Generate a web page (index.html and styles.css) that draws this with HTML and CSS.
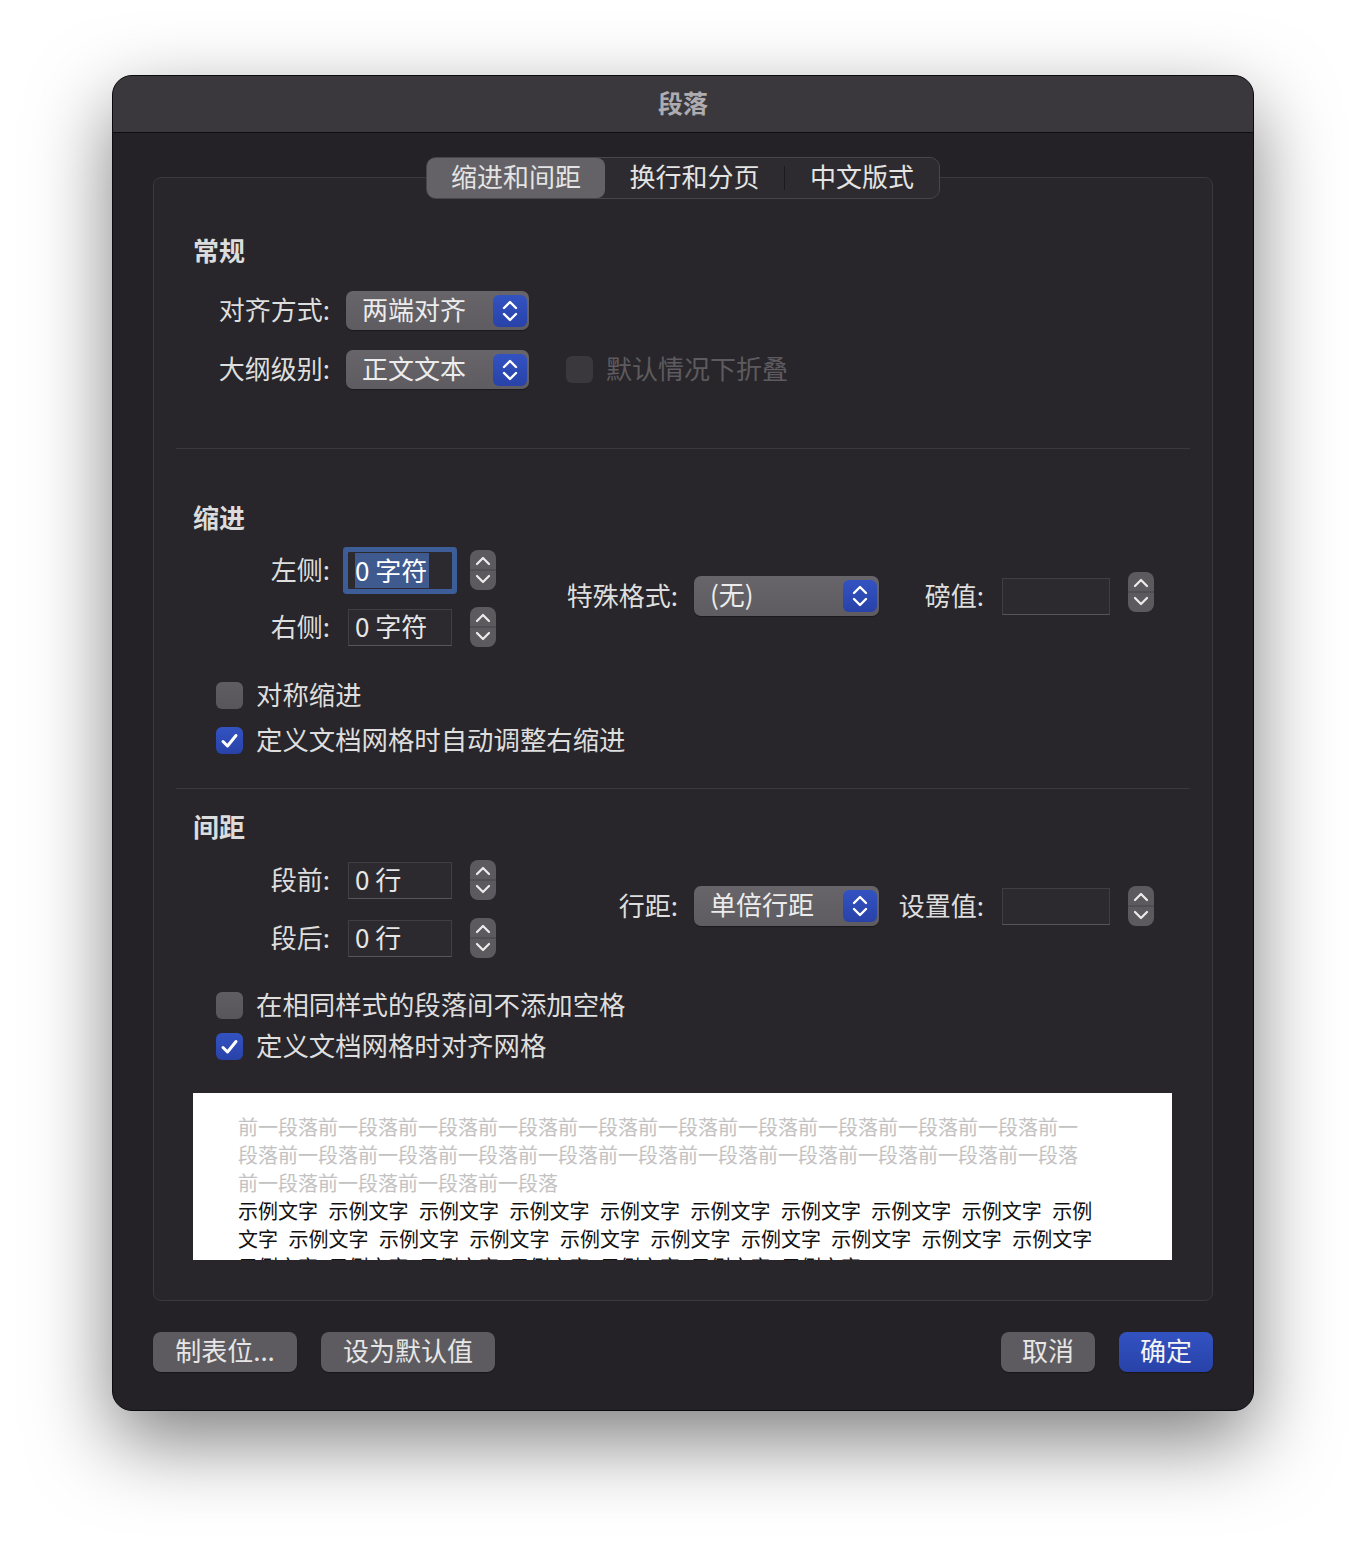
FILE: index.html
```html
<!DOCTYPE html>
<html lang="zh-CN">
<head>
    <meta charset="UTF-8">
    <meta name="viewport" content="width=device-width, initial-scale=1.0">
    <title>段落</title>
    <link rel="stylesheet" href="styles.css">
</head>
<body>

<div class="window">
    <div class="titlebar">段落</div>

    <div class="content">
        <!-- Tabs -->
        <div class="tabs-wrap">
            <div class="tabs">
                <div class="tab active">缩进和间距</div>
                <div class="tab">换行和分页</div>
                <div class="tab-sep"></div>
                <div class="tab last">中文版式</div>
            </div>
        </div>

        <div class="group">
            <!-- General -->
            <section class="sec general">
                <h2>常规</h2>
                <div class="row first">
                    <span class="lbl">对齐方式:</span>
                    <div class="popup">
                        <span>两端对齐</span>
                        <svg class="arrows" viewBox="0 0 34 32"><path d="M11 13l6-6 6 6M11 19l6 6 6-6" fill="none" stroke="#fff" stroke-width="2.4" stroke-linecap="round" stroke-linejoin="round"/></svg>
                    </div>
                </div>
                <div class="row">
                    <span class="lbl">大纲级别:</span>
                    <div class="popup">
                        <span>正文文本</span>
                        <svg class="arrows" viewBox="0 0 34 32"><path d="M11 13l6-6 6 6M11 19l6 6 6-6" fill="none" stroke="#fff" stroke-width="2.4" stroke-linecap="round" stroke-linejoin="round"/></svg>
                    </div>
                    <span class="box disabled"></span>
                    <span class="disabled-text">默认情况下折叠</span>
                </div>
            </section>

            <!-- Indent -->
            <section class="sec indent">
                <h2>缩进</h2>
                <div class="fields">
                    <div class="stack">
                        <div class="frow">
                            <span class="lbl">左侧:</span>
                            <div class="field focused"><span class="sel">0 字符</span></div>
                            <svg class="stepper" viewBox="0 0 26 40"><rect width="26" height="40" rx="8" fill="#5c5a5e"/><line x1="0" y1="20" x2="26" y2="20" stroke="#444246"/><path d="M7 14l6-6 6 6M7 26l6 6 6-6" fill="none" stroke="#ececec" stroke-width="2.2" stroke-linecap="round" stroke-linejoin="round"/></svg>
                        </div>
                        <div class="frow">
                            <span class="lbl">右侧:</span>
                            <div class="field">0 字符</div>
                            <svg class="stepper" viewBox="0 0 26 40"><rect width="26" height="40" rx="8" fill="#5c5a5e"/><line x1="0" y1="20" x2="26" y2="20" stroke="#444246"/><path d="M7 14l6-6 6 6M7 26l6 6 6-6" fill="none" stroke="#ececec" stroke-width="2.2" stroke-linecap="round" stroke-linejoin="round"/></svg>
                        </div>
                    </div>
                    <div class="side up5">
                        <span class="lbl1">特殊格式:</span>
                        <div class="popup wide">
                            <span>(无)</span>
                            <svg class="arrows" viewBox="0 0 34 32"><path d="M11 13l6-6 6 6M11 19l6 6 6-6" fill="none" stroke="#fff" stroke-width="2.4" stroke-linecap="round" stroke-linejoin="round"/></svg>
                        </div>
                        <span class="lbl2">磅值:</span>
                        <div class="field wide"></div>
                        <svg class="stepper raised" viewBox="0 0 26 40"><rect width="26" height="40" rx="8" fill="#5c5a5e"/><line x1="0" y1="20" x2="26" y2="20" stroke="#444246"/><path d="M7 14l6-6 6 6M7 26l6 6 6-6" fill="none" stroke="#ececec" stroke-width="2.2" stroke-linecap="round" stroke-linejoin="round"/></svg>
                    </div>
                </div>
                <div class="check first">
                    <span class="box"></span>
                    <span class="ctext">对称缩进</span>
                </div>
                <div class="check">
                    <span class="box on"><svg viewBox="0 0 27 27"><path d="M7 14.5l4.5 4.5 8.5-10.5" fill="none" stroke="#fff" stroke-width="3" stroke-linecap="round" stroke-linejoin="round"/></svg></span>
                    <span class="ctext">定义文档网格时自动调整右缩进</span>
                </div>
            </section>

            <!-- Spacing -->
            <section class="sec spacing">
                <h2>间距</h2>
                <div class="fields">
                    <div class="stack">
                        <div class="frow">
                            <span class="lbl">段前:</span>
                            <div class="field">0 行</div>
                            <svg class="stepper" viewBox="0 0 26 40"><rect width="26" height="40" rx="8" fill="#5c5a5e"/><line x1="0" y1="20" x2="26" y2="20" stroke="#444246"/><path d="M7 14l6-6 6 6M7 26l6 6 6-6" fill="none" stroke="#ececec" stroke-width="2.2" stroke-linecap="round" stroke-linejoin="round"/></svg>
                        </div>
                        <div class="frow">
                            <span class="lbl">段后:</span>
                            <div class="field">0 行</div>
                            <svg class="stepper" viewBox="0 0 26 40"><rect width="26" height="40" rx="8" fill="#5c5a5e"/><line x1="0" y1="20" x2="26" y2="20" stroke="#444246"/><path d="M7 14l6-6 6 6M7 26l6 6 6-6" fill="none" stroke="#ececec" stroke-width="2.2" stroke-linecap="round" stroke-linejoin="round"/></svg>
                        </div>
                    </div>
                    <div class="side up6">
                        <span class="lbl1">行距:</span>
                        <div class="popup wide">
                            <span>单倍行距</span>
                            <svg class="arrows" viewBox="0 0 34 32"><path d="M11 13l6-6 6 6M11 19l6 6 6-6" fill="none" stroke="#fff" stroke-width="2.4" stroke-linecap="round" stroke-linejoin="round"/></svg>
                        </div>
                        <span class="lbl2">设置值:</span>
                        <div class="field wide"></div>
                        <svg class="stepper" viewBox="0 0 26 40"><rect width="26" height="40" rx="8" fill="#5c5a5e"/><line x1="0" y1="20" x2="26" y2="20" stroke="#444246"/><path d="M7 14l6-6 6 6M7 26l6 6 6-6" fill="none" stroke="#ececec" stroke-width="2.2" stroke-linecap="round" stroke-linejoin="round"/></svg>
                    </div>
                </div>
                <div class="check first">
                    <span class="box"></span>
                    <span class="ctext">在相同样式的段落间不添加空格</span>
                </div>
                <div class="check tight">
                    <span class="box on"><svg viewBox="0 0 27 27"><path d="M7 14.5l4.5 4.5 8.5-10.5" fill="none" stroke="#fff" stroke-width="3" stroke-linecap="round" stroke-linejoin="round"/></svg></span>
                    <span class="ctext">定义文档网格时对齐网格</span>
                </div>

                <!-- Preview -->
                <div class="preview">
                    <div class="before">前一段落前一段落前一段落前一段落前一段落前一段落前一段落前一段落前一段落前一段落前一</div>
                    <div class="before">段落前一段落前一段落前一段落前一段落前一段落前一段落前一段落前一段落前一段落前一段落</div>
                    <div class="before">前一段落前一段落前一段落前一段落</div>
                    <div class="sample">示例文字 示例文字 示例文字 示例文字 示例文字 示例文字 示例文字 示例文字 示例文字 示例</div>
                    <div class="sample">文字 示例文字 示例文字 示例文字 示例文字 示例文字 示例文字 示例文字 示例文字 示例文字</div>
                    <div class="sample">示例文字 示例文字 示例文字 示例文字 示例文字 示例文字 示例文字</div>
                </div>
            </section>
        </div>

        <!-- Buttons -->
        <div class="buttons">
            <div class="btn-group">
                <div class="btn w144">制表位...</div>
                <div class="btn w174">设为默认值</div>
            </div>
            <div class="btn-group">
                <div class="btn w94">取消</div>
                <div class="btn w94 primary">确定</div>
            </div>
        </div>
    </div>
</div>

</body>
</html>
```

FILE: styles.css
```css
* {
    box-sizing: border-box;
}
body {
    margin: 0;
    min-height: 100vh;
    padding: 75px 0 0 112px;
    background: #ffffff;
    font-family: "Noto Sans CJK SC", "Noto Sans", sans-serif;
    color: #dedede;
}
.window {
    width: 1142px;
    background: #242226;
    border: 1px solid #0c0b0d;
    border-radius: 20px;
    overflow: hidden;
    box-shadow: 0 30px 80px rgba(0, 0, 0, 0.5);
}
.titlebar {
    height: 57px;
    background: #3a383c;
    border-bottom: 1px solid #0e0d0f;
    text-align: center;
    font-size: 25px;
    line-height: 52px;
    font-weight: bold;
    color: #aeacb0;
}
.content {
    padding: 24px 40px 38px;
}

/* tabs */
.tabs-wrap {
    display: flex;
    justify-content: center;
    position: relative;
    z-index: 1;
}
.tabs {
    display: flex;
    align-items: center;
    height: 42px;
    border: 1px solid #48464a;
    border-radius: 10px;
    background: #2d2b2f;
}
.tab {
    width: 179px;
    height: 40px;
    display: flex;
    align-items: center;
    justify-content: center;
    padding-bottom: 5px;
    font-size: 26px;
    color: #e4e4e4;
    border-radius: 8px;
}
.tab.active {
    width: 178px;
    background: #646266;
}
.tab.last {
    width: 154px;
}
.tab-sep {
    width: 1px;
    height: 24px;
    background: #1b1a1d;
}

/* group box */
.group {
    margin-top: -22px;
    border: 1px solid #3b393d;
    border-radius: 8px;
    background: #28262a;
    padding: 55px 22px 40px;
}
.sec {
    padding-left: 17px;
}
h2 {
    margin: 0;
    font-size: 26px;
    line-height: 34px;
    font-weight: bold;
    color: #dcdcdc;
}
.general {
    padding-bottom: 59px;
    border-bottom: 1px solid #3b393d;
}
.indent {
    padding-top: 51px;
    padding-bottom: 31px;
    border-bottom: 1px solid #3b393d;
}
.spacing {
    padding-top: 20px;
}

.row {
    display: flex;
    align-items: center;
    height: 39px;
    margin-top: 20px;
}
.row.first {
    margin-top: 24px;
}
.lbl,
.lbl1,
.lbl2 {
    flex-shrink: 0;
    text-align: right;
    font-size: 26px;
    padding-bottom: 4px;
}
.lbl {
    width: 137px;
}
.lbl1 {
    width: 113px;
}
.lbl2 {
    width: 105px;
}

/* popup buttons */
.popup {
    margin-left: 16px;
    width: 183px;
    height: 39px;
    flex-shrink: 0;
    display: flex;
    align-items: center;
    justify-content: space-between;
    padding: 0 2px 0 16px;
    border-radius: 7px;
    background: linear-gradient(#676569, #5e5c60);
    box-shadow: 0 1px 1px rgba(0, 0, 0, 0.35);
    font-size: 26px;
    color: #ececec;
}
.popup span {
    padding-bottom: 5px;
}
.popup.wide {
    width: 185px;
    height: 40px;
}
.arrows {
    width: 34px;
    height: 32px;
    border-radius: 6px;
    background: linear-gradient(#3353c2, #2842a8);
}

/* checkboxes */
.box {
    width: 27px;
    height: 27px;
    flex-shrink: 0;
    border-radius: 6px;
    background: linear-gradient(#5f5d61, #58565a);
    margin-right: 13px;
}
.box svg {
    display: block;
    width: 27px;
    height: 27px;
}
.box.on {
    background: linear-gradient(#3353c2, #2842a8);
}
.box.disabled {
    margin-left: 37px;
    background: #3a383c;
}
.disabled-text {
    font-size: 26px;
    color: #5d5b5f;
    padding-bottom: 4px;
}
.check {
    display: flex;
    align-items: center;
    height: 34px;
    margin-top: 11px;
    padding-left: 23px;
    font-size: 26.4px;
}
.ctext {
    padding-bottom: 4px;
}
.check.first {
    margin-top: 31px;
}
.spacing .check.first {
    margin-top: 30px;
}
.check.tight {
    margin-top: 7px;
}

/* text fields and steppers */
.fields {
    display: flex;
    align-items: center;
    margin-top: 16px;
}
.spacing .fields {
    margin-top: 17px;
}
.stack {
    display: flex;
    flex-direction: column;
    gap: 17px;
}
.spacing .stack {
    gap: 18px;
}
.frow {
    display: flex;
    align-items: center;
    height: 40px;
}
.field {
    margin-left: 18px;
    width: 104px;
    height: 37px;
    flex-shrink: 0;
    padding-left: 6px;
    background: #2c2a2e;
    border: 1px solid #403e42;
    border-bottom-color: #57555a;
    font-size: 26px;
    line-height: 31px;
    color: #e6e6e6;
}
.field.wide {
    width: 108px;
}
.field.focused {
    border-color: #2c2a2e;
    border-radius: 1px;
    box-shadow: 0 0 0 5px #3d5d99;
}
.sel {
    display: inline-block;
    line-height: 33px;
    padding: 0 2px 2px 0;
    background: #3e5a8e;
    color: #ffffff;
}
.stepper {
    margin-left: 18px;
    width: 26px;
    height: 40px;
    flex-shrink: 0;
}
.stepper.raised {
    margin-bottom: 8px;
}
.side {
    display: flex;
    align-items: center;
    margin-left: 69px;
}
.side.up5 {
    margin-top: -5px;
}
.side.up6 {
    margin-top: -6px;
}

/* preview */
.preview {
    margin-top: 30px;
    width: 979px;
    height: 167px;
    overflow: hidden;
    background: #ffffff;
    padding: 20px 45px 0;
    font-size: 20px;
    line-height: 28px;
    white-space: nowrap;
}
.before {
    color: #c2c2c2;
}
.sample {
    color: #111111;
    word-spacing: 6px;
}

/* bottom buttons */
.buttons {
    display: flex;
    justify-content: space-between;
    margin-top: 31px;
}
.btn-group {
    display: flex;
    gap: 24px;
}
.btn {
    height: 40px;
    display: flex;
    align-items: center;
    justify-content: center;
    padding-bottom: 5px;
    border-radius: 8px;
    background: #5d5b5f;
    box-shadow: 0 1px 1px rgba(0, 0, 0, 0.35);
    font-size: 26px;
    color: #e6e6e6;
}
.btn.primary {
    background: linear-gradient(#3353c2, #2842a8);
    color: #f4f4f4;
}
.w144 {
    width: 144px;
}
.w174 {
    width: 174px;
}
.w94 {
    width: 94px;
}
```
